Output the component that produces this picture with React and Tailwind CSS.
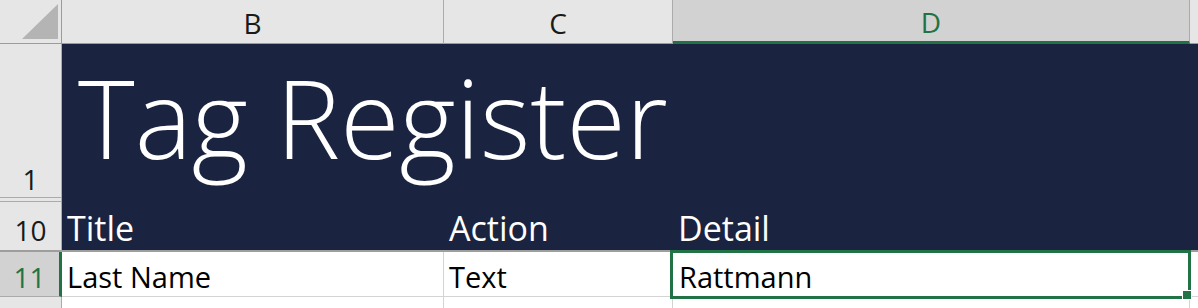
const navy = "bg-[#1a2440]";

function ColHead({ label, selected }) {
    return (
        <div
            className={`flex items-end justify-center border-r border-[#ababab] ${
                selected
                    ? "bg-[#d2d2d2] border-b-[3px] border-b-[#217346] text-[#217346] pb-[5px]"
                    : "bg-[#e6e6e6] border-b border-b-[#9b9b9b] text-[#1a1a1a] pb-[6px]"
            }`}
        >
            <span className="text-[28px] leading-none">{label}</span>
        </div>
    );
}

export default function App() {
    return (
        <div
            className="grid w-[1198px] h-[308px] overflow-hidden bg-white grid-cols-[62px_382px_229px_517px_1fr] grid-rows-[44px_158px_50px_45px_1fr]"
            style={{ fontFamily: '"Open Sans", "Noto Sans", sans-serif' }}
        >
            {/* column headers */}
            <div className="flex items-center justify-end bg-[#e6e6e6] border-r border-b border-[#9b9b9b] pr-[3px]">
                <svg width="36" height="35" viewBox="0 0 36 35">
                    <polygon points="36,0 36,35 0,35" fill="#b4b4b4" />
                </svg>
            </div>
            <ColHead label="B" />
            <ColHead label="C" />
            <ColHead label="D" selected />
            <div className="bg-[#e6e6e6] border-b border-[#9b9b9b]" />

            {/* row 1 */}
            <div className="bg-[#e6e6e6] border-r border-b border-[#ababab]">
                <div className="h-[154px] flex items-end justify-center border-b border-[#ababab] pb-[4px]">
                    <span className="text-[28px] leading-none text-[#1a1a1a]">1</span>
                </div>
            </div>
            <div className={`col-span-4 ${navy} flex items-end pl-[16px] pb-[30px]`}>
                <span className="text-[108px] leading-none font-light text-white whitespace-nowrap">
                    Tag Register
                </span>
            </div>

            {/* row 10 */}
            <div className="flex items-end justify-center bg-[#e6e6e6] border-r border-[#ababab] border-b-2 border-b-[#9e9e9e] pb-[6px]">
                <span className="text-[28px] leading-none text-[#1a1a1a]">10</span>
            </div>
            {["Title", "Action", "Detail", ""].map((t, i) => (
                <div
                    key={i}
                    className={`${navy} border-b-2 border-[#9e9e9e] flex items-end pl-[5px] pb-[5px]`}
                >
                    <span className="text-[34px] leading-none text-white">{t}</span>
                </div>
            ))}

            {/* row 11 */}
            <div className="flex items-end justify-center bg-[#d2d2d2] border-r-[3px] border-r-[#217346] border-b border-b-[#ababab] pb-[5px]">
                <span className="text-[28px] leading-none text-[#217346]">11</span>
            </div>
            <div className="flex items-end border-r border-b border-[#d4d4d4] pl-[5px] pb-[5px]">
                <span className="text-[29px] leading-none text-black">Last Name</span>
            </div>
            <div className="flex items-end border-r border-b border-[#d4d4d4] pl-[5px] pb-[5px]">
                <span className="text-[29px] leading-none text-black">Text</span>
            </div>
            <div className="relative z-10 flex items-end border-r border-b border-[#d4d4d4] pl-[6px] pb-[5px]">
                <span className="text-[29px] leading-none text-black">Rattmann</span>
                <div className="absolute -left-[3px] -top-[2px] -right-[2px] -bottom-[3px] border-[3px] border-[#217346]" />
                <div className="absolute -right-[3px] -bottom-[4px] w-[10px] h-[10px] bg-[#217346] border border-white" />
            </div>
            <div className="border-b border-[#d4d4d4]" />

            {/* row 12 */}
            <div className="bg-[#e6e6e6] border-r border-[#ababab]" />
            <div className="border-r border-[#d4d4d4]" />
            <div className="border-r border-[#d4d4d4]" />
            <div className="border-r border-[#d4d4d4]" />
            <div />
        </div>
    );
}
